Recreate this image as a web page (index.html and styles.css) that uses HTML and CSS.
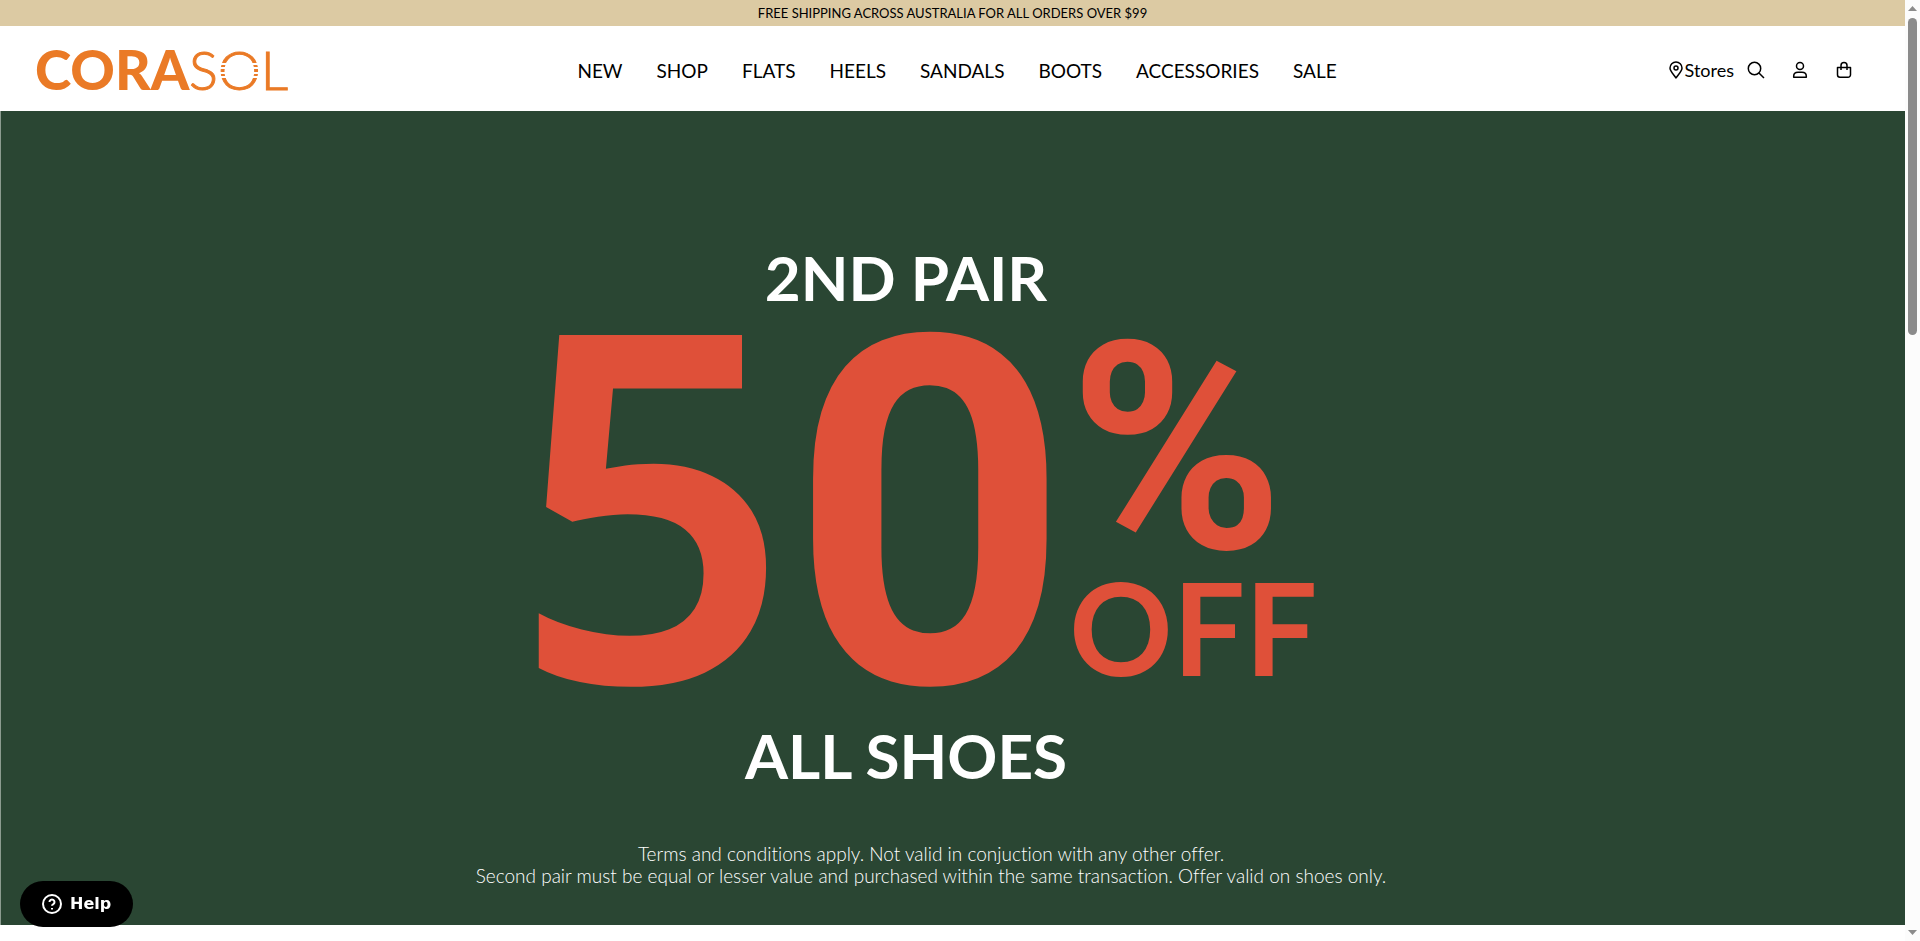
FILE: index.html
```html
<!DOCTYPE html>
<html lang="en">
<head>
<meta charset="utf-8">
<meta name="viewport" content="width=device-width, initial-scale=1">
<title>Corasol</title>
<link rel="stylesheet" href="styles.css">
</head>
<body>
<div class="page">
  <p class="announcement">FREE SHIPPING ACROSS AUSTRALIA FOR ALL ORDERS OVER $99</p>
  <header class="header">
    <a class="logo" href="#" aria-label="Corasol home">
      <svg width="264" height="68" viewBox="0 0 264 68">
        <text class="logo-bold" x="3" y="54">CORA</text>
        <text class="logo-light" x="157" y="54">SOL</text>
        <path class="logo-gaps" d="M187 28h42M187 32h42M187 37h42M187 41h42"/>
      </svg>
    </a>
    <nav class="nav" aria-label="Main">
      <a href="#">NEW</a>
      <a href="#">SHOP</a>
      <a href="#">FLATS</a>
      <a href="#">HEELS</a>
      <a href="#">SANDALS</a>
      <a href="#">BOOTS</a>
      <a href="#">ACCESSORIES</a>
      <a href="#">SALE</a>
    </nav>
    <div class="tools">
      <a class="stores" href="#">
        <svg width="14" height="18" viewBox="0 0 14 18"><path d="M7 17C5.400 14 1 10.500 1 7a6 6 0 0 1 12 0C13 10.500 8.600 14 7 17z"/><circle cx="7" cy="7" r="2"/></svg>
        Stores
      </a>
      <button class="tool" type="button" aria-label="Search">
        <svg width="18" height="18" viewBox="0 0 18 18"><circle cx="7.500" cy="7.500" r="6.200"/><path d="M12 12l5 5"/></svg>
      </button>
      <button class="tool" type="button" aria-label="Account">
        <svg width="18" height="18" viewBox="0 0 18 18"><circle cx="9" cy="5" r="3.500"/><path d="M2.700 16.300v-1.100c0-2.600 2-3.900 4.300-3.900h4c2.300 0 4.300 1.300 4.300 3.900v1.100z"/></svg>
      </button>
      <button class="tool" type="button" aria-label="Cart">
        <svg width="18" height="18" viewBox="0 0 18 18"><path d="M2.500 6.500h13v7.300a2.500 2.500 0 0 1-2.500 2.500H5a2.500 2.500 0 0 1-2.500-2.500zM6 9V4.500a3 3 0 0 1 6 0V9"/></svg>
      </button>
    </div>
  </header>
  <main class="hero">
    <h1 class="offer">
      <span class="caption">2ND PAIR</span>
      <span class="discount">
        <span class="number"><span class="five">5</span>0</span>
        <span class="unit">
          <span class="percent">%</span>
          <span class="off">OFF</span>
        </span>
      </span>
      <span class="caption">ALL SHOES</span>
    </h1>
    <p class="terms">Terms and conditions apply. Not valid in conjuction with any other offer.<br>Second pair must be equal or lesser value and purchased within the same transaction. Offer valid on shoes only.</p>
  </main>
</div>
<div class="scrollbar" aria-hidden="true">
  <svg width="9" height="5" viewBox="0 0 9 5"><path d="M0 5L4.500 0 9 5z"/></svg>
  <div class="track"><div class="thumb"></div></div>
  <svg width="9" height="5" viewBox="0 0 9 5"><path d="M0 0h9L4.500 5z"/></svg>
</div>
<button class="help" type="button">
  <svg width="20" height="20" viewBox="0 0 20 20"><circle cx="10" cy="10" r="9"/><path d="M7.500 8a2.500 2.500 0 1 1 3.800 2.100c-.9.500-1.300.9-1.300 1.700"/><path d="M10 14v1.500"/></svg>
  Help
</button>
</body>
</html>
```
FILE: styles.css
```css
* {
  box-sizing: border-box;
}

body {
  display: flex;
  margin: 0;
  background: #fff;
  color: #000;
  font-family: Lato, "Liberation Sans", sans-serif;
  font-variant-ligatures: none;
}

a {
  color: inherit;
  text-decoration: none;
}

svg {
  display: block;
  flex: none;
}

button {
  border: 0;
  padding: 0;
  background: none;
  color: inherit;
  cursor: pointer;
}

.page {
  flex: 1;
  min-width: 0;
}

.announcement {
  margin: 0;
  background: #dccaa3;
  font-size: 13px;
  line-height: 26px;
  text-align: center;
}

.header {
  display: grid;
  grid-template-columns: 1fr auto 1fr;
  align-items: center;
  padding: 10px 39px 7px 32px;
}

.logo {
  justify-self: start;
}

.logo-bold,
.logo-light {
  fill: #ea7a26;
  font-size: 54px;
}

.logo-bold {
  font-size: 55px;
  font-weight: 900;
}

.logo-light {
  stroke: #ea7a26;
  stroke-width: 1;
  font-weight: 300;
}

.logo-gaps {
  stroke: #fff;
  stroke-width: 2;
}

.nav {
  display: flex;
  gap: 34px;
  margin-left: 16px;
  font-size: 19px;
  line-height: 45px;
}

.tools {
  display: flex;
  align-items: center;
  justify-self: end;
}

.tools svg {
  fill: none;
  stroke: #000;
  stroke-width: 1.5;
  stroke-linejoin: round;
}

.stores {
  display: flex;
  align-items: center;
  gap: 2px;
  font-size: 18px;
}

.tool {
  display: grid;
  place-items: center;
  width: 44px;
  height: 44px;
}

.hero {
  padding: 130px 44px 38px 0;
  border-left: 1px solid #8c9c90;
  background: #2a4633;
  text-align: center;
}

.offer {
  display: grid;
  justify-items: center;
  margin: 0;
  font-weight: 700;
}

.caption {
  padding-right: 50px;
  color: #fff;
  font-size: 62px;
  line-height: 72px;
}

.discount {
  display: flex;
  align-items: center;
  padding-right: 32px;
  color: #df5039;
}

.number {
  font-family: Roboto, sans-serif;
  font-size: 486px;
  line-height: 406px;
}

.five {
  font-family: "Noto Sans", sans-serif;
  font-weight: 600;
  line-height: 360px;
}

.unit {
  display: grid;
  justify-items: start;
}

.percent {
  font-family: Roboto, sans-serif;
  font-size: 290px;
  line-height: 222px;
}

.off {
  font-size: 128px;
  line-height: 134px;
}

.terms {
  margin: 52px 0 0;
  color: #fff;
  font-size: 19px;
  font-weight: 300;
  line-height: 22px;
}

.scrollbar {
  position: sticky;
  top: 0;
  display: flex;
  flex-direction: column;
  align-items: center;
  gap: 7px;
  width: 15px;
  height: 100vh;
  padding: 6px 0;
  background: #fcfcfc;
}

.scrollbar svg {
  fill: #8b8b8b;
}

.track {
  flex: 1;
}

.thumb {
  width: 9px;
  height: 35%;
  border-radius: 5px;
  background: #8b8b8b;
}

.help {
  position: fixed;
  bottom: 14px;
  left: 20px;
  display: flex;
  align-items: center;
  gap: 8px;
  padding: 0 22px;
  border-radius: 23px;
  background: #000;
  color: #fff;
  font-family: "DejaVu Sans", sans-serif;
  font-size: 16px;
  font-weight: 700;
  line-height: 46px;
}

.help svg {
  fill: none;
  stroke: #fff;
  stroke-width: 2;
}
```
